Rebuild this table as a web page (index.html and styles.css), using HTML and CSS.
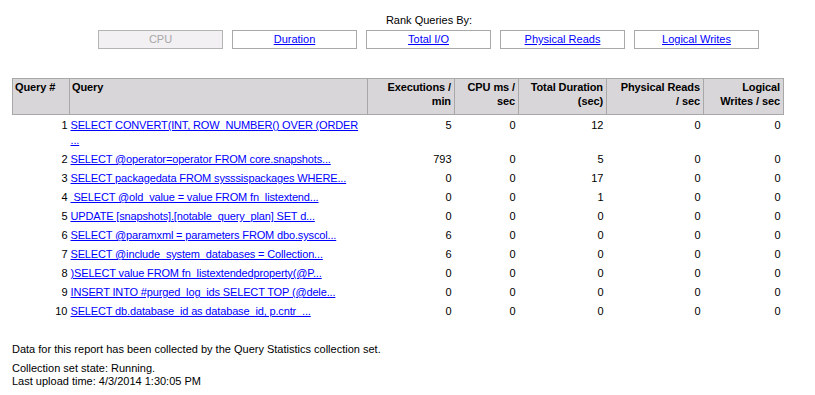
FILE: index.html
```html
<!DOCTYPE html>
<html>
<head>
<meta charset="utf-8">
<link rel="stylesheet" href="styles.css">
</head>
<body>
<div class="page">
  <div class="rank">
    <div class="rank-title">Rank Queries By:</div>
    <div class="rank-buttons">
      <span class="btn btn-disabled">CPU</span>
      <a class="btn" href="#">Duration</a>
      <a class="btn" href="#">Total I/O</a>
      <a class="btn" href="#">Physical Reads</a>
      <a class="btn" href="#">Logical Writes</a>
    </div>
  </div>

  <table class="grid">
    <colgroup>
      <col class="c-num"><col class="c-query"><col class="c-exec"><col class="c-cpu"><col class="c-dur"><col class="c-phys"><col class="c-log">
    </colgroup>
    <thead>
      <tr>
        <th class="left">Query #</th>
        <th class="left">Query</th>
        <th>Executions /<br>min</th>
        <th>CPU ms /<br>sec</th>
        <th>Total Duration<br>(sec)</th>
        <th>Physical Reads<br>/ sec</th>
        <th>Logical<br>Writes / sec</th>
      </tr>
    </thead>
    <tbody>
      <tr><td class="n">1</td><td class="q"><a href="#">SELECT CONVERT(INT, ROW_NUMBER() OVER (ORDER<br>...</a></td><td>5</td><td>0</td><td>12</td><td>0</td><td>0</td></tr>
      <tr><td class="n">2</td><td class="q"><a href="#">SELECT @operator=operator FROM core.snapshots...</a></td><td>793</td><td>0</td><td>5</td><td>0</td><td>0</td></tr>
      <tr><td class="n">3</td><td class="q"><a href="#">SELECT packagedata FROM sysssispackages WHERE...</a></td><td>0</td><td>0</td><td>17</td><td>0</td><td>0</td></tr>
      <tr><td class="n">4</td><td class="q"><a href="#">&nbsp;SELECT @old_value = value FROM fn_listextend...</a></td><td>0</td><td>0</td><td>1</td><td>0</td><td>0</td></tr>
      <tr><td class="n">5</td><td class="q"><a href="#">UPDATE [snapshots].[notable_query_plan] SET d...</a></td><td>0</td><td>0</td><td>0</td><td>0</td><td>0</td></tr>
      <tr><td class="n">6</td><td class="q"><a href="#">SELECT @paramxml = parameters FROM dbo.syscol...</a></td><td>6</td><td>0</td><td>0</td><td>0</td><td>0</td></tr>
      <tr><td class="n">7</td><td class="q"><a href="#">SELECT @include_system_databases = Collection...</a></td><td>6</td><td>0</td><td>0</td><td>0</td><td>0</td></tr>
      <tr><td class="n">8</td><td class="q"><a href="#">)SELECT value FROM fn_listextendedproperty(@P...</a></td><td>0</td><td>0</td><td>0</td><td>0</td><td>0</td></tr>
      <tr><td class="n">9</td><td class="q"><a href="#">INSERT INTO #purged_log_ids SELECT TOP (@dele...</a></td><td>0</td><td>0</td><td>0</td><td>0</td><td>0</td></tr>
      <tr><td class="n">10</td><td class="q"><a href="#">SELECT db.database_id as database_id, p.cntr_...</a></td><td>0</td><td>0</td><td>0</td><td>0</td><td>0</td></tr>
    </tbody>
  </table>

  <div class="footer">
    <p class="note">Data for this report has been collected by the Query Statistics collection set.</p>
    <p class="state">Collection set state: Running.<br>Last upload time: 4/3/2014 1:30:05 PM</p>
  </div>
</div>
</body>
</html>
```

FILE: styles.css
```css
html, body {
  margin: 0;
  padding: 0;
  background: #ffffff;
}

body {
  font-family: "Liberation Sans", Arial, sans-serif;
  font-size: 11px;
  color: #000000;
}

.page {
  padding: 14px 0 0 12px;
}

.rank {
  display: flex;
  flex-direction: column;
  align-items: flex-start;
  padding-left: 86px;
}

.rank-title {
  width: 662px;
  text-align: center;
  line-height: 13px;
  height: 16px;
}

.rank-buttons {
  display: flex;
  gap: 9px;
}

.btn {
  box-sizing: border-box;
  display: block;
  width: 125px;
  height: 19px;
  line-height: 17px;
  border: 1px solid #a9a9a9;
  text-align: center;
  color: #0000ff;
  text-decoration: underline;
  background: #ffffff;
}

.btn-disabled {
  color: #a7a7a7;
  text-decoration: none;
  background-color: #f3f0f3;
  border-color: #b4b4b4;
}

.grid {
  margin-top: 29px;
  border-collapse: collapse;
  table-layout: fixed;
  width: 771px;
}

.c-num { width: 57px; }
.c-query { width: 298px; }
.c-exec { width: 87px; }
.c-cpu { width: 64px; }
.c-dur { width: 88px; }
.c-phys { width: 97px; }
.c-log { width: 80px; }

.grid th {
  background-color: #d9d6d9;
  border: 1px solid #a8a8a8;
  font-weight: bold;
  text-align: right;
  vertical-align: top;
  padding: 1px 3px 0 2px;
  height: 34px;
  line-height: 14px;
  letter-spacing: -0.1px;
}

.grid th.left {
  text-align: left;
}

.grid td {
  text-align: right;
  vertical-align: top;
  padding: 3px 3px 1px 2px;
  line-height: 15px;
}

.grid td.n {
  padding-right: 2px;
}

.grid td.q {
  text-align: left;
  padding-left: 1px;
  letter-spacing: -0.15px;
}

.grid a {
  color: #0000ff;
  text-decoration: underline;
}

.footer {
  margin-top: 23px;
}

.footer p {
  margin: 0;
  line-height: 13px;
}

.footer .note {
  margin-bottom: 6px;
}
```
